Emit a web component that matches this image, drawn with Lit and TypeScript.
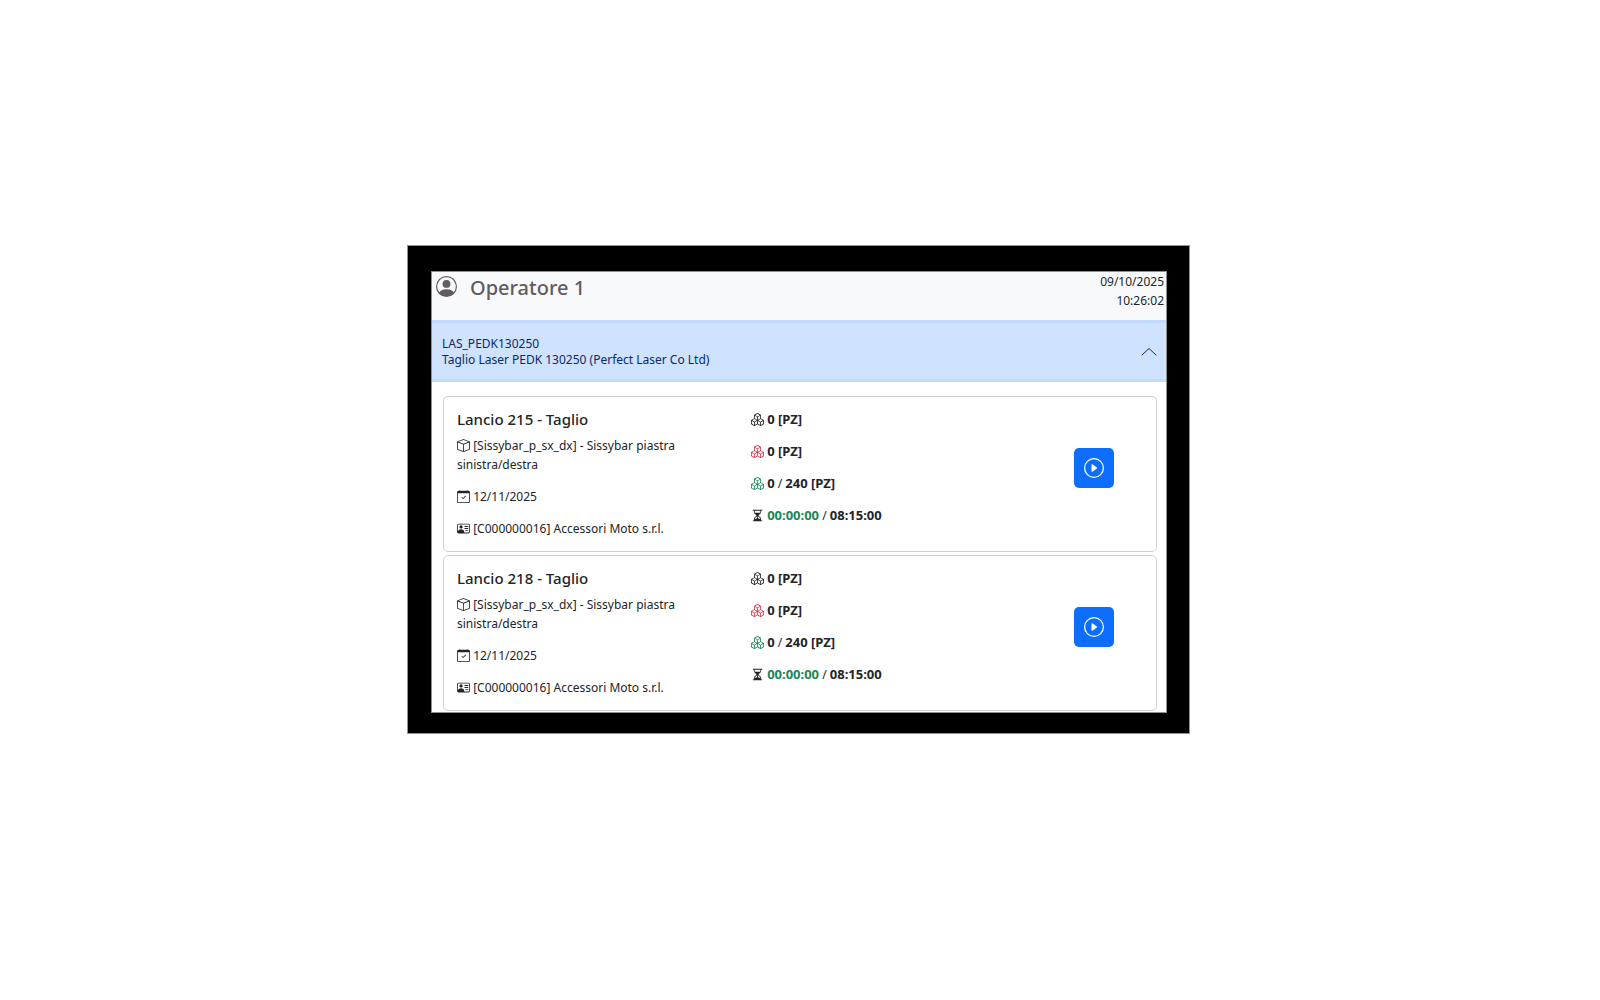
import { LitElement, html, css, svg } from "lit";
import { customElement, property, state } from "lit/decorators.js";

const ICONS = {
  person: svg`<path d="M11 6a3 3 0 1 1-6 0 3 3 0 0 1 6 0z"/><path fill-rule="evenodd" d="M0 8a8 8 0 1 1 16 0A8 8 0 0 1 0 8zm8-7a7 7 0 0 0-5.468 11.37C3.242 11.226 4.805 10 8 10s4.757 1.225 5.468 2.37A7 7 0 0 0 8 1z"/>`,
  chevron: svg`<path fill="none" stroke="currentColor" stroke-width="1" stroke-linecap="round" stroke-linejoin="round" d="M1 5l7 6.500 7-6.500"/>`,
  box: svg`<path d="M8.186 1.113a.5.5 0 0 0-.372 0L1.846 3.5 8 5.961 14.154 3.5 8.186 1.113zM15 4.239l-6.5 2.6v7.922l6.5-2.6V4.24zM7.5 14.762V6.838L1 4.239v7.923l6.5 2.6zM7.443.184a1.5 1.5 0 0 1 1.114 0l7.129 2.852A.5.5 0 0 1 16 3.5v8.662a1 1 0 0 1-.629.928l-7.185 2.874a.5.5 0 0 1-.372 0L.63 13.09a1 1 0 0 1-.63-.928V3.5a.5.5 0 0 1 .314-.464L7.443.184z"/>`,
  calendar: svg`<path d="M10.854 7.146a.5.5 0 0 1 0 .708l-3 3a.5.5 0 0 1-.708 0l-1.5-1.5a.5.5 0 1 1 .708-.708L7.5 9.793l2.646-2.647a.5.5 0 0 1 .708 0z"/><path d="M3.5 0a.5.5 0 0 1 .5.5V1h8V.5a.5.5 0 0 1 1 0V1h1a2 2 0 0 1 2 2v11a2 2 0 0 1-2 2H2a2 2 0 0 1-2-2V3a2 2 0 0 1 2-2h1V.5a.5.5 0 0 1 .5-.5zM1 4v10a1 1 0 0 0 1 1h12a1 1 0 0 0 1-1V4H1z"/>`,
  vcard: svg`<path d="M5 8a2 2 0 1 0 0-4 2 2 0 0 0 0 4Zm4-2.5a.5.5 0 0 1 .5-.5h4a.5.5 0 0 1 0 1h-4a.5.5 0 0 1-.5-.5ZM9 8a.5.5 0 0 1 .5-.5h4a.5.5 0 0 1 0 1h-4A.5.5 0 0 1 9 8Zm1 2.5a.5.5 0 0 1 .5-.5h3a.5.5 0 0 1 0 1h-3a.5.5 0 0 1-.5-.5Z"/><path d="M2 2a2 2 0 0 0-2 2v8a2 2 0 0 0 2 2h12a2 2 0 0 0 2-2V4a2 2 0 0 0-2-2H2ZM1 4a1 1 0 0 1 1-1h12a1 1 0 0 1 1 1v8a1 1 0 0 1-1 1H8.96c.026-.163.04-.33.04-.5C9 10.567 7.21 9 5 9c-2.086 0-3.8 1.398-3.984 3.181A1.006 1.006 0 0 1 1 12V4Z"/>`,
  boxes: svg`<path d="M7.752.066a.5.5 0 0 1 .496 0l3.75 2.143a.5.5 0 0 1 .252.434v3.995l3.498 2A.5.5 0 0 1 16 9.07v4.286a.5.5 0 0 1-.252.434l-3.75 2.143a.5.5 0 0 1-.496 0l-3.502-2-3.502 2.001a.5.5 0 0 1-.496 0l-3.75-2.143A.5.5 0 0 1 0 13.357V9.071a.5.5 0 0 1 .252-.434L3.75 6.638V2.643a.5.5 0 0 1 .252-.434L7.752.066ZM4.25 7.504 1.508 9.071l2.742 1.567 2.742-1.567L4.25 7.504ZM7.5 9.933l-2.75 1.571v3.134l2.75-1.571V9.933Zm1 3.134 2.75 1.571v-3.134L8.5 9.933v3.134Zm.508-3.996 2.742 1.567 2.742-1.567-2.742-1.567-2.742 1.567Zm2.242-2.433V3.504L8.5 5.076V8.21l2.75-1.572ZM7.5 8.21V5.076L4.75 3.504v3.134L7.5 8.21ZM5.258 2.643 8 4.21l2.742-1.567L8 1.076 5.258 2.643ZM15 9.933l-2.75 1.571v3.134L15 13.067V9.933ZM3.75 14.638v-3.134L1 9.933v3.134l2.75 1.571Z"/>`,
  hourglass: svg`<path d="M2.5 15a.5.5 0 1 1 0-1h1v-1a4.5 4.5 0 0 1 2.557-4.06c.29-.139.443-.377.443-.59v-.7c0-.213-.154-.451-.443-.59A4.5 4.5 0 0 1 3.5 3V2h-1a.5.5 0 0 1 0-1h11a.5.5 0 0 1 0 1h-1v1a4.5 4.5 0 0 1-2.557 4.06c-.29.139-.443.377-.443.59v.7c0 .213.154.451.443.59A4.5 4.5 0 0 1 12.5 13v1h1a.5.5 0 0 1 0 1h-11zm2-13v1c0 .537.12 1.045.337 1.5h6.326c.216-.455.337-.963.337-1.5V2h-7zm3 6.35c0 .701-.478 1.236-1.011 1.492A3.5 3.5 0 0 0 4.5 13s.866-1.299 3-1.48V8.35zm1 0v3.17c2.134.181 3 1.48 3 1.48a3.5 3.5 0 0 0-1.989-3.158C8.978 9.586 8.5 9.052 8.5 8.351z"/>`,
  play: svg`<path d="M8 15A7 7 0 1 1 8 1a7 7 0 0 1 0 14zm0 1A8 8 0 1 0 8 0a8 8 0 0 0 0 16z"/><path d="M6.271 5.055a.5.5 0 0 1 .52.038l3.5 2.5a.5.5 0 0 1 0 .814l-3.5 2.5A.5.5 0 0 1 6 10.5v-5a.5.5 0 0 1 .271-.445z"/>`,
};

const icon = (name: keyof typeof ICONS, cls = "") =>
  html`<svg class="icon ${cls}" viewBox="0 0 16 16" fill="currentColor" aria-hidden="true">${ICONS[name]}</svg>`;

interface Job {
  launch: number;
  phase: string;
  article: string;
  due: string;
  customer: string;
  loaded: number;
  scrap: number;
  done: number;
  total: number;
  elapsed: string;
  planned: string;
}

const base = {
  phase: "Taglio",
  article: "[Sissybar_p_sx_dx] - Sissybar piastra sinistra/destra",
  due: "12/11/2025",
  customer: "[C000000016] Accessori Moto s.r.l.",
  loaded: 0,
  scrap: 0,
  done: 0,
  total: 240,
  elapsed: "00:00:00",
  planned: "08:15:00",
};

const JOBS: Job[] = [
  { launch: 215, ...base },
  { launch: 218, ...base },
];

@customElement("job-card")
export class JobCard extends LitElement {
  @property({ attribute: false }) job!: Job;

  static styles = css`
    :host {
      display: block;
    }
    .card {
      display: grid;
      grid-template-columns: 3fr 3fr 1fr;
      padding: 13px 13px 0;
      border: 1px solid #ced2d6;
      border-radius: 5px;
      background: #fff;
    }
    .title {
      margin: 0 0 7px;
      font-size: 15px;
      font-weight: 500;
      line-height: 19px;
    }
    .line {
      margin: 0 0 13px;
      line-height: 19px;
    }
    .details .line {
      padding-right: 24px;
    }
    .icon {
      width: 13px;
      height: 13px;
      vertical-align: -2px;
    }
    .danger {
      color: #dc3545;
    }
    .success {
      color: #198754;
    }
    .line b {
      font-size: 13px;
      font-weight: 700;
    }
    .action {
      display: flex;
      align-items: center;
      justify-content: center;
      padding-bottom: 25px;
    }
    .play {
      display: grid;
      place-items: center;
      width: 40px;
      height: 40px;
      padding: 0;
      border: 0;
      border-radius: 5px;
      background: #0d6efd;
      color: #fff;
      cursor: pointer;
    }
    .play .icon {
      width: 20px;
      height: 20px;
    }
  `;

  render() {
    const j = this.job;
    return html`
      <article class="card">
        <div class="details">
          <h2 class="title">Lancio ${j.launch} - ${j.phase}</h2>
          <p class="line">${icon("box")} ${j.article}</p>
          <p class="line">${icon("calendar")} ${j.due}</p>
          <p class="line">${icon("vcard")} ${j.customer}</p>
        </div>
        <div class="counts">
          <p class="line">${icon("boxes")} <b>${j.loaded} [PZ]</b></p>
          <p class="line">${icon("boxes", "danger")} <b>${j.scrap} [PZ]</b></p>
          <p class="line">${icon("boxes", "success")} <b>${j.done}</b> / <b>${j.total} [PZ]</b></p>
          <p class="line">${icon("hourglass")} <b class="success">${j.elapsed}</b> / <b>${j.planned}</b></p>
        </div>
        <div class="action">
          <button class="play" type="button" aria-label="Avvia lancio ${j.launch}">${icon("play")}</button>
        </div>
      </article>
    `;
  }
}

@customElement("app-root")
export class AppRoot extends LitElement {
  @state() private open = true;

  static styles = css`
    :host {
      display: flex;
      align-items: center;
      justify-content: center;
      box-sizing: border-box;
      min-height: 100vh;
      padding: 0 3px 21px 0;
      background: #fff;
      color: #212529;
      font-family: "Noto Sans", "Open Sans", sans-serif;
      font-size: 12px;
    }
    .bezel {
      box-sizing: border-box;
      width: 100%;
      max-width: 783px;
      padding: 25px 22px 20px 23px;
      border: 1px solid #8f9492;
      background: #000;
    }
    .screen {
      border: 1px solid #8f9492;
      background: #fff;
    }
    .topbar {
      display: flex;
      justify-content: space-between;
      height: 48px;
      padding: 0 2px 0 4px;
      box-sizing: border-box;
      background: #f8f9fa;
    }
    .operator {
      display: flex;
      align-items: flex-start;
      gap: 13px;
      color: #625c5f;
    }
    .operator .icon {
      width: 21px;
      height: 21px;
      padding-top: 4px;
    }
    .name {
      margin: 0;
      font-size: 20px;
      font-weight: 500;
      line-height: 32px;
    }
    .clock {
      line-height: 19px;
      text-align: right;
    }
    .machine {
      margin: 0;
      font-size: inherit;
      font-weight: inherit;
    }
    .toggle {
      display: flex;
      align-items: center;
      justify-content: space-between;
      width: 100%;
      padding: 13px 9px 11px 10px;
      border: solid #c2dafe;
      border-width: 3px 0;
      background: #cfe2ff;
      color: #0a2b68;
      font: inherit;
      line-height: 16px;
      text-align: left;
      cursor: pointer;
    }
    .toggle .icon {
      width: 16px;
      height: 16px;
    }
    .toggle[aria-expanded="true"] .icon {
      transform: rotate(180deg);
    }
    .jobs {
      display: grid;
      gap: 3px;
      padding: 14px 9px 1px 11px;
    }
  `;

  render() {
    return html`
      <main class="bezel">
        <div class="screen">
          <header class="topbar">
            <div class="operator">
              ${icon("person")}
              <h1 class="name">Operatore 1</h1>
            </div>
            <time class="clock" datetime="2025-10-09T10:26:02">09/10/2025<br />10:26:02</time>
          </header>
          <h2 class="machine">
            <button
              class="toggle"
              type="button"
              aria-expanded=${this.open ? "true" : "false"}
              @click=${() => (this.open = !this.open)}
            >
              <span>LAS_PEDK130250<br />Taglio Laser PEDK 130250 (Perfect Laser Co Ltd)</span>
              ${icon("chevron")}
            </button>
          </h2>
          ${this.open
            ? html`<section class="jobs">${JOBS.map((job) => html`<job-card .job=${job}></job-card>`)}</section>`
            : null}
        </div>
      </main>
    `;
  }
}
